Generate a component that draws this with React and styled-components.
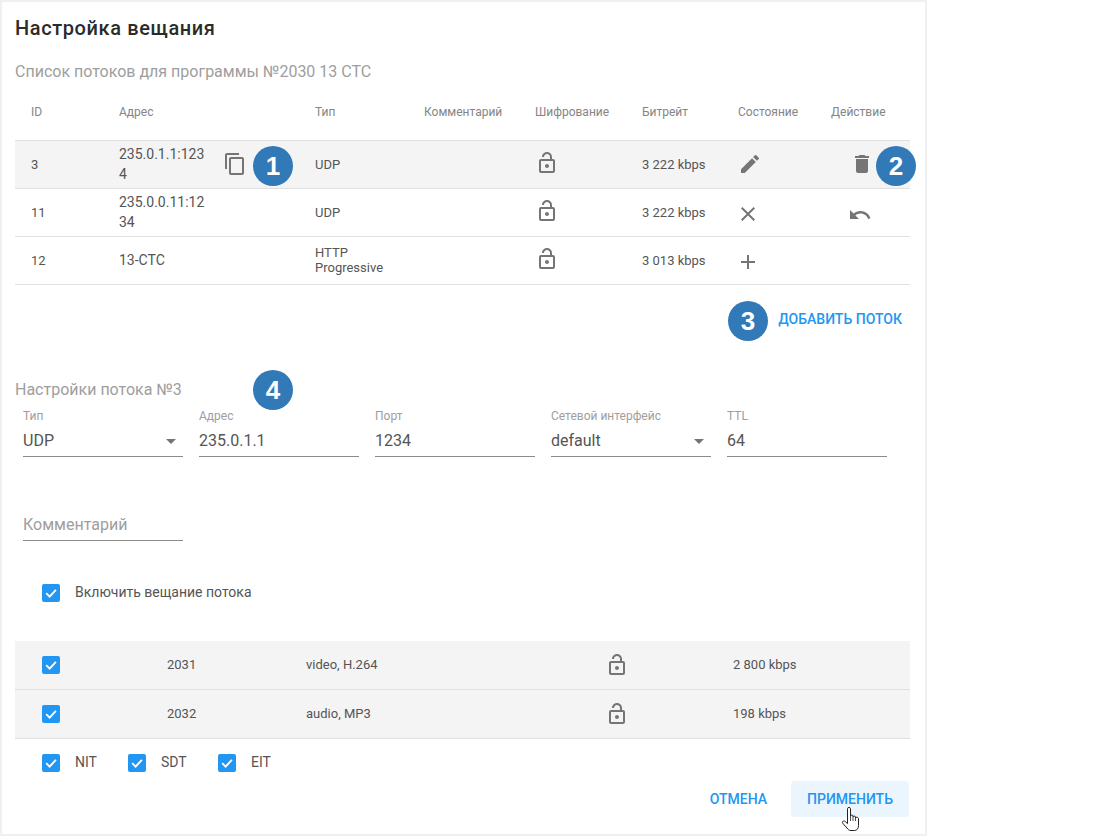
import React from "react";
import styled, { createGlobalStyle } from "styled-components";
import {
  MdAdd,
  MdClose,
  MdContentCopy,
  MdDelete,
  MdEdit,
  MdOutlineLockOpen,
  MdUndo,
} from "react-icons/md";

const Global = createGlobalStyle`
  html, body {
    margin: 0;
    background: #fff;
  }
  body {
    font-family: Roboto, "Liberation Sans", sans-serif;
    color: #555;
  }
`;

const streamCols = ["ID", "Адрес", "Тип", "Комментарий", "Шифрование", "Битрейт", "Состояние", "Действие"];

const streams = [
  { id: "3", addr: "235.0.1.1:1234", type: "UDP", rate: "3 222 kbps", state: MdEdit, stateDy: -1, action: MdDelete, actionDy: -1, actionDx: 2, lockDy: -2, active: true, copy: true },
  { id: "11", addr: "235.0.0.11:1234", type: "UDP", rate: "3 222 kbps", state: MdClose, stateDy: 1, stateDx: -2, action: MdUndo, actionDy: 2, lockDy: -2 },
  { id: "12", addr: "13-СТС", type: "HTTP Progressive", rate: "3 013 kbps", state: MdAdd, stateDy: 1, stateDx: -2, lockDy: -2, wrapType: true },
];

const tracks = [
  { pid: "2031", codec: "video, H.264", rate: "2 800 kbps" },
  { pid: "2032", codec: "audio, MP3", rate: "198 kbps" },
];

const Check = () => (
  <CheckBox>
    <svg width="14" height="14" viewBox="0 0 14 14">
      <path d="M2.2 7.2 5.6 10.6 11.9 3.8" fill="none" stroke="#fff" strokeWidth="1.9" />
    </svg>
  </CheckBox>
);

const Select = ({ label, value, select }) => (
  <Field>
    <FieldLabel>{label}</FieldLabel>
    <FieldValue>
      {value}
      {select && <Caret />}
    </FieldValue>
  </Field>
);

const Hand = () => (
  <HandCursor width="20" height="26" viewBox="0 0 20 26">
    <path
      d="M6.5 2.7C6.5 1 9.5 1 9.5 2.7V10C9.5 8.8 12 8.8 12 10V11C12 9.8 14.5 9.8 14.5 11V12C14.5 11 17.5 11 17.5 12.5V19.5C17.5 22.5 16 24.5 13.5 24.5H10C8 24.5 7 23.5 6 22L1.7 17.2C.7 15.7 2.7 14 4.2 15.5L6.5 17.6Z"
      fill="#fff"
      stroke="#222"
      strokeWidth="1"
    />
    <path d="M9.5 10V15M12 11V15M14.5 12V15" fill="none" stroke="#222" strokeWidth="0.8" />
  </HandCursor>
);

const App = () => {
  return (
    <Card>
      <Global />
      <Title>Настройка вещания</Title>
      <Subtitle>Список потоков для программы №2030 13 СТС</Subtitle>

      <HeadRow>
        {streamCols.map((c) => (
          <HeadCell key={c}>{c}</HeadCell>
        ))}
      </HeadRow>
      {streams.map((s) => {
        const State = s.state;
        const Action = s.action;
        return (
          <StreamRow key={s.id} $active={s.active}>
            <Cell>{s.id}</Cell>
            <Cell>
              <Address>{s.addr}</Address>
              {s.copy && (
                <IconSlot $dy={-1}>
                  <MdContentCopy size={24} color="#757575" />
                </IconSlot>
              )}
            </Cell>
            <Cell>
              <TypeText $wrapped={s.wrapType}>{s.type}</TypeText>
            </Cell>
            <Cell />
            <Cell>
              <IconSlot $dy={s.lockDy}>
                <MdOutlineLockOpen size={24} color="#757575" />
              </IconSlot>
            </Cell>
            <Cell>{s.rate}</Cell>
            <Cell>
              <IconSlot $dy={s.stateDy} $dx={s.stateDx}>
                <State size={24} color="#757575" />
              </IconSlot>
            </Cell>
            <ActionCell>
              {Action && (
                <IconSlot $dy={s.actionDy} $dx={s.actionDx}>
                  <Action size={24} color="#757575" />
                </IconSlot>
              )}
            </ActionCell>
          </StreamRow>
        );
      })}

      <AddBar>
        <TextButton>Добавить поток</TextButton>
      </AddBar>

      <Subtitle $top={43}>Настройки потока №3</Subtitle>
      <Fields>
        <Select label="Тип" value="UDP" select />
        <Select label="Адрес" value="235.0.1.1" />
        <Select label="Порт" value="1234" />
        <Select label="Сетевой интерфейс" value="default" select />
        <Select label="TTL" value="64" />
      </Fields>
      <CommentField>Комментарий</CommentField>

      <EnableRow>
        <Check />
        <CheckLabel>Включить вещание потока</CheckLabel>
      </EnableRow>

      <TrackList>
        {tracks.map((t) => (
          <TrackRow key={t.pid}>
            <Check />
            <TrackText>{t.pid}</TrackText>
            <TrackText>{t.codec}</TrackText>
            <MdOutlineLockOpen size={24} color="#757575" />
            <TrackText>{t.rate}</TrackText>
          </TrackRow>
        ))}
      </TrackList>

      <TablesRow>
        <Check />
        <CheckLabel $width={53}>NIT</CheckLabel>
        <Check />
        <CheckLabel $width={57}>SDT</CheckLabel>
        <Check />
        <CheckLabel>EIT</CheckLabel>
      </TablesRow>

      <Footer>
        <TextButton>Отмена</TextButton>
        <TextButton $hover>Применить</TextButton>
      </Footer>

      <Badge $left={251} $top={144}>1</Badge>
      <Badge $left={874} $top={144}>2</Badge>
      <Badge $left={726} $top={299}>3</Badge>
      <Badge $left={251} $top={368}>4</Badge>
      <Hand />
    </Card>
  );
};

export default App;

const Card = styled.div`
  position: relative;
  box-sizing: border-box;
  width: 927px;
  height: 836px;
  padding: 14px 15px 0 13px;
  border: 2px solid #f0f0f0;
`;

const Title = styled.div`
  font-size: 20px;
  font-weight: 500;
  line-height: 24px;
  letter-spacing: 0.6px;
  color: #2b2b2b;
`;

const Subtitle = styled.div`
  margin-top: ${(p) => p.$top || 22}px;
  font-size: 16px;
  line-height: 20px;
  color: #9e9e9e;
`;

const columns = "88px 196px 109px 111px 107px 96px 93px 95px";

const HeadRow = styled.div`
  display: grid;
  grid-template-columns: ${columns};
  box-sizing: border-box;
  height: 57px;
  margin-top: 2px;
  border-bottom: 1px solid #e0e0e0;
`;

const HeadCell = styled.div`
  display: flex;
  align-items: center;
  padding-left: 16px;
  font-size: 12px;
  color: #858585;
  white-space: nowrap;
`;

const StreamRow = styled.div`
  display: grid;
  grid-template-columns: ${columns};
  box-sizing: border-box;
  height: 48px;
  border-bottom: 1px solid #e0e0e0;
  background: ${(p) => (p.$active ? "#f4f4f4" : "transparent")};
`;

const Cell = styled.div`
  display: flex;
  align-items: center;
  padding-left: 16px;
  font-size: 13px;
  color: #555;
`;

const ActionCell = styled(Cell)`
  padding-left: 33px;
`;

// margins on a centred flex item move it by half their size
const IconSlot = styled.span`
  display: flex;
  margin-top: ${(p) => (p.$dy > 0 ? p.$dy * 2 : 0)}px;
  margin-bottom: ${(p) => (p.$dy < 0 ? -p.$dy * 2 : 0)}px;
  margin-left: ${(p) => p.$dx || 0}px;
`;

const Address = styled.div`
  width: 88px;
  margin: 0 16px 2px 0;
  font-size: 14px;
  line-height: 20px;
  word-break: break-all;
`;

const TypeText = styled.div`
  width: 80px;
  margin-bottom: ${(p) => (p.$wrapped ? 2 : 0)}px;
  line-height: 15px;
`;

const AddBar = styled.div`
  display: flex;
  justify-content: flex-end;
  margin-top: 16px;
`;

const TextButton = styled.div`
  box-sizing: border-box;
  height: 36px;
  padding: 0 ${(p) => (p.$hover ? 16 : 8)}px;
  border-radius: 4px;
  background: ${(p) => (p.$hover ? "#ebf5fd" : "transparent")};
  font-size: 14px;
  font-weight: 500;
  line-height: 36px;
  color: #2196f3;
  text-transform: uppercase;
`;

const Fields = styled.div`
  display: flex;
  gap: 16px;
  margin-top: 8px;
  padding-left: 8px;
`;

const Field = styled.div`
  width: 160px;
`;

const FieldLabel = styled.div`
  height: 16px;
  font-size: 12px;
  line-height: 16px;
  color: #9e9e9e;
`;

const FieldValue = styled.div`
  position: relative;
  height: 24px;
  padding: 5px 0 3px;
  border-bottom: 1px solid #8c8c8c;
  font-size: 16px;
  line-height: 24px;
  color: #555;
`;

const Caret = styled.span`
  position: absolute;
  right: 7px;
  top: 15px;
  border-top: 5px solid #757575;
  border-left: 5px solid transparent;
  border-right: 5px solid transparent;
`;

const CommentField = styled.div`
  width: 160px;
  height: 24px;
  margin: 55px 0 0 8px;
  padding: 1px 0 3px;
  border-bottom: 1px solid #8c8c8c;
  font-size: 16px;
  line-height: 24px;
  color: #9e9e9e;
`;

const CheckBox = styled.span`
  display: flex;
  align-items: center;
  justify-content: center;
  width: 18px;
  height: 18px;
  border-radius: 2px;
  background: #2196f3;
`;

const CheckLabel = styled.span`
  width: ${(p) => (p.$width ? `${p.$width}px` : "auto")};
  margin: 0 0 2px 15px;
  font-size: 14px;
  color: #555;
`;

const EnableRow = styled.div`
  display: flex;
  align-items: center;
  height: 18px;
  margin-top: 43px;
  padding-left: 27px;
`;

const TrackList = styled.div`
  margin-top: 39px;
  background: #f4f4f4;
`;

const TrackRow = styled.div`
  display: grid;
  grid-template-columns: 125px 139px 299px 128px 1fr;
  align-items: center;
  box-sizing: border-box;
  height: 49px;
  padding-left: 27px;
  border-bottom: 1px solid #e0e0e0;
  font-size: 13px;
  color: #555;
`;

const TrackText = styled.span`
  margin-bottom: 2px;
`;

const TablesRow = styled.div`
  display: flex;
  align-items: center;
  height: 18px;
  margin-top: 15px;
  padding-left: 27px;
`;

const Footer = styled.div`
  display: flex;
  justify-content: flex-end;
  gap: 16px;
  margin: 9px 1px 0 0;
`;

const Badge = styled.div`
  position: absolute;
  left: ${(p) => p.$left}px;
  top: ${(p) => p.$top}px;
  width: 40px;
  height: 40px;
  border-radius: 50%;
  background: #3179b7;
  color: #fff;
  font-family: "Liberation Sans", Arial, sans-serif;
  font-size: 26px;
  font-weight: 700;
  line-height: 40px;
  text-align: center;
`;

const HandCursor = styled.svg`
  position: absolute;
  left: 839px;
  top: 804px;
`;
